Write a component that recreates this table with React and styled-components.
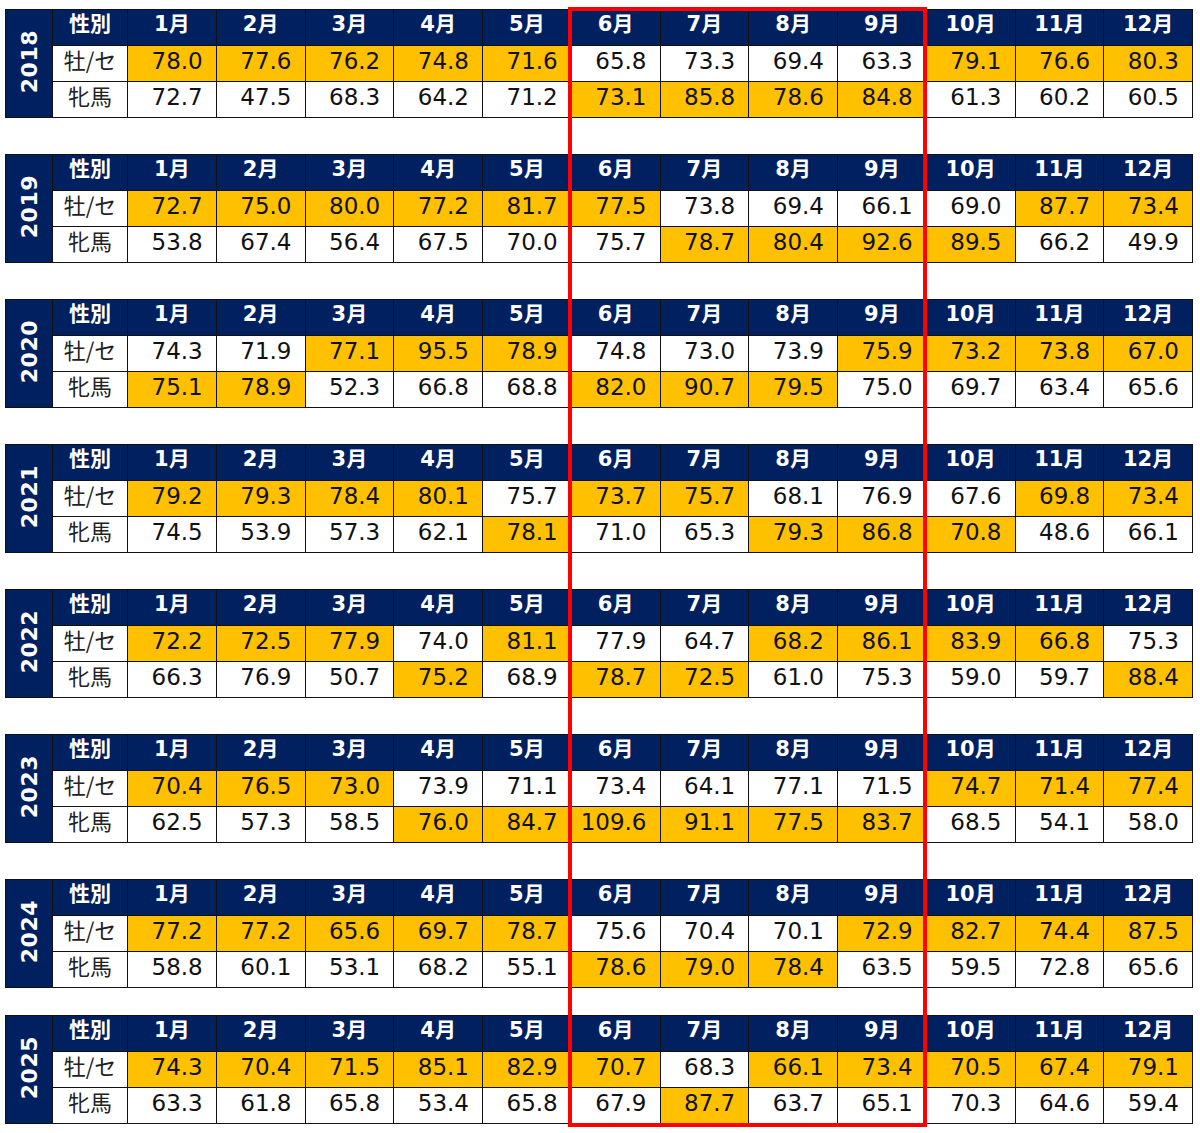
import React from "react";
import styled, { createGlobalStyle } from "styled-components";

const NAVY = "#002060";
const GOLD = "#FFC000";
const YEAR_W = 47;
const SEX_W = 75;
const MONTH_W = 88.75;
const LEFT = 5;
const TOP = 9;

const GlobalStyle = createGlobalStyle`
  body {
    margin: 0;
    background: #fff;
    font-family: "DejaVu Sans", "Noto Sans CJK JP", sans-serif;
  }
`;

const Page = styled.div`
  position: relative;
  width: 1200px;
  height: 1133px;
  box-sizing: border-box;
  padding: ${TOP}px 0 0 ${LEFT}px;
  overflow: hidden;
`;

const Block = styled.table`
  border-collapse: collapse;
  table-layout: fixed;
  width: ${YEAR_W + SEX_W + MONTH_W * 12}px;
  margin-top: ${(p) => p.$gap}px;
`;

const Row = styled.tr`
  height: 36px;
`;

const YearCell = styled.th`
  background: ${NAVY};
  border: 1px solid #111;
  padding: 0;
`;

const YearText = styled.span`
  display: inline-block;
  writing-mode: vertical-rl;
  transform: rotate(180deg);
  color: #fff;
  font-size: 22px;
  font-weight: bold;
  letter-spacing: 0.5px;
`;

const HeadCell = styled.th`
  background: ${NAVY};
  color: #fff;
  border: 1px solid #111;
  padding: 0 0 8px 0;
  font-size: 21px;
  line-height: 24px;
  font-weight: bold;
  text-align: center;
  vertical-align: middle;
`;

const LabelCell = styled.td`
  background: #fff;
  border: 1px solid #111;
  padding: 0 0 10px 0;
  font-family: "Noto Sans CJK JP", sans-serif;
  font-size: 22px;
  line-height: 24px;
  color: #222;
  text-align: center;
  vertical-align: middle;
`;

const ValueCell = styled.td`
  background: ${(p) => (p.$hi ? GOLD : "#fff")};
  border: 1px solid #111;
  padding: 0 13px 6px 0;
  font-size: 23px;
  line-height: 26px;
  color: #111;
  text-align: right;
  vertical-align: middle;
`;

const RedFrame = styled.div`
  position: absolute;
  left: ${LEFT + YEAR_W + SEX_W + MONTH_W * 5 - 3}px;
  top: 7px;
  width: ${MONTH_W * 4 + 4}px;
  height: 1120px;
  border: 4px solid #ff0000;
  box-sizing: border-box;
  pointer-events: none;
`;

const months = ["1月", "2月", "3月", "4月", "5月", "6月", "7月", "8月", "9月", "10月", "11月", "12月"];

// hi: 1 = gold cell in the 牡/セ row, 0 = gold cell in the 牝馬 row
const data = [
  {
    year: "2018",
    male: ["78.0", "77.6", "76.2", "74.8", "71.6", "65.8", "73.3", "69.4", "63.3", "79.1", "76.6", "80.3"],
    female: ["72.7", "47.5", "68.3", "64.2", "71.2", "73.1", "85.8", "78.6", "84.8", "61.3", "60.2", "60.5"],
    hi: "111110000111",
  },
  {
    year: "2019",
    male: ["72.7", "75.0", "80.0", "77.2", "81.7", "77.5", "73.8", "69.4", "66.1", "69.0", "87.7", "73.4"],
    female: ["53.8", "67.4", "56.4", "67.5", "70.0", "75.7", "78.7", "80.4", "92.6", "89.5", "66.2", "49.9"],
    hi: "111111000011",
  },
  {
    year: "2020",
    male: ["74.3", "71.9", "77.1", "95.5", "78.9", "74.8", "73.0", "73.9", "75.9", "73.2", "73.8", "67.0"],
    female: ["75.1", "78.9", "52.3", "66.8", "68.8", "82.0", "90.7", "79.5", "75.0", "69.7", "63.4", "65.6"],
    hi: "001110001111",
  },
  {
    year: "2021",
    male: ["79.2", "79.3", "78.4", "80.1", "75.7", "73.7", "75.7", "68.1", "76.9", "67.6", "69.8", "73.4"],
    female: ["74.5", "53.9", "57.3", "62.1", "78.1", "71.0", "65.3", "79.3", "86.8", "70.8", "48.6", "66.1"],
    hi: "111101100011",
  },
  {
    year: "2022",
    male: ["72.2", "72.5", "77.9", "74.0", "81.1", "77.9", "64.7", "68.2", "86.1", "83.9", "66.8", "75.3"],
    female: ["66.3", "76.9", "50.7", "75.2", "68.9", "78.7", "72.5", "61.0", "75.3", "59.0", "59.7", "88.4"],
    hi: "111010011110",
  },
  {
    year: "2023",
    male: ["70.4", "76.5", "73.0", "73.9", "71.1", "73.4", "64.1", "77.1", "71.5", "74.7", "71.4", "77.4"],
    female: ["62.5", "57.3", "58.5", "76.0", "84.7", "109.6", "91.1", "77.5", "83.7", "68.5", "54.1", "58.0"],
    hi: "111000000111",
  },
  {
    year: "2024",
    male: ["77.2", "77.2", "65.6", "69.7", "78.7", "75.6", "70.4", "70.1", "72.9", "82.7", "74.4", "87.5"],
    female: ["58.8", "60.1", "53.1", "68.2", "55.1", "78.6", "79.0", "78.4", "63.5", "59.5", "72.8", "65.6"],
    hi: "111110001111",
  },
  {
    year: "2025",
    male: ["74.3", "70.4", "71.5", "85.1", "82.9", "70.7", "68.3", "66.1", "73.4", "70.5", "67.4", "79.1"],
    female: ["63.3", "61.8", "65.8", "53.4", "65.8", "67.9", "87.7", "63.7", "65.1", "70.3", "64.6", "59.4"],
    hi: "111111011111",
  },
];

function YearBlock({ item, gap }) {
  return (
    <Block $gap={gap}>
      <colgroup>
        <col style={{ width: YEAR_W }} />
        <col style={{ width: SEX_W }} />
        {months.map((m) => (
          <col key={m} style={{ width: MONTH_W }} />
        ))}
      </colgroup>
      <tbody>
        <Row>
          <YearCell rowSpan={3}>
            <YearText>{item.year}</YearText>
          </YearCell>
          <HeadCell>性別</HeadCell>
          {months.map((m) => (
            <HeadCell key={m}>{m}</HeadCell>
          ))}
        </Row>
        <Row>
          <LabelCell>牡/セ</LabelCell>
          {item.male.map((v, i) => (
            <ValueCell key={i} $hi={item.hi[i] === "1"}>
              {v}
            </ValueCell>
          ))}
        </Row>
        <Row>
          <LabelCell>牝馬</LabelCell>
          {item.female.map((v, i) => (
            <ValueCell key={i} $hi={item.hi[i] === "0"}>
              {v}
            </ValueCell>
          ))}
        </Row>
      </tbody>
    </Block>
  );
}

export default function App() {
  return (
    <Page>
      <GlobalStyle />
      {data.map((item, i) => (
        <YearBlock
          key={item.year}
          item={item}
          gap={i === 0 ? 0 : i === data.length - 1 ? 27 : 36}
        />
      ))}
      <RedFrame />
    </Page>
  );
}
